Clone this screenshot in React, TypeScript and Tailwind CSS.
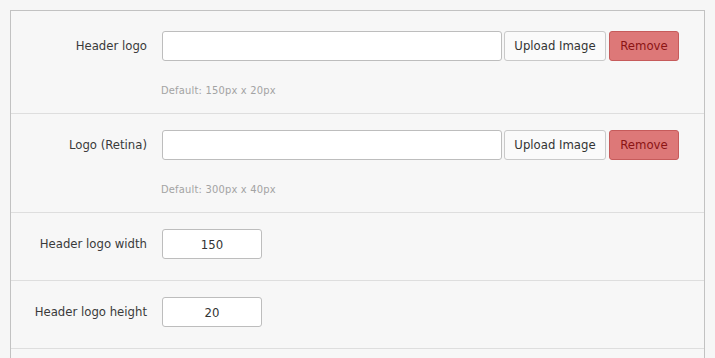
import React from 'react';

const font = { fontFamily: '"DejaVu Sans Condensed", "DejaVu Sans", Verdana, sans-serif' };

interface UploadRowProps {
  label: string;
  hint: string;
  first?: boolean;
}

const UploadRow: React.FC<UploadRowProps> = ({ label, hint, first }) => (
  <div className={`border-b border-[#dedede] pb-[15px] ${first ? 'pt-[20px]' : 'pt-[16px]'}`}>
    <div className="flex items-center">
      <label className="w-[136px] shrink-0 text-right text-[13px] text-[#3a3a3a]">{label}</label>
      <div className="ml-[15px] flex items-center">
        <input
          type="text"
          className="w-[340px] h-[30px] rounded-[3px] border border-[#bdbdbd] bg-white px-2 text-[13px] outline-none"
        />
        <button className="ml-[2px] h-[30px] w-[102px] rounded-[3px] border border-[#c9c9c9] bg-[#fafafa] text-[13px] text-[#333]">
          Upload Image
        </button>
        <button className="ml-[3px] h-[30px] w-[70px] rounded-[3px] border border-[#c65b5b] bg-[#dd7878] text-[13px] text-[#8b1414]">
          Remove
        </button>
      </div>
    </div>
    <div className="ml-[150px] mt-[22px] text-[11px] leading-[15px] tracking-[0.2px] text-[#a3a3a3]">{hint}</div>
  </div>
);

interface NumberRowProps {
  label: string;
  value: string;
}

const NumberRow: React.FC<NumberRowProps> = ({ label, value }) => (
  <div className="border-b border-[#dedede] pt-[16px] pb-[21px] flex items-center">
    <label className="w-[136px] shrink-0 text-right text-[13px] text-[#3a3a3a]">{label}</label>
    <input
      type="text"
      defaultValue={value}
      className="ml-[15px] w-[100px] h-[30px] rounded-[3px] border border-[#bdbdbd] bg-white text-center text-[13px] text-[#333] outline-none"
    />
  </div>
);

export default function App() {
  return (
    <div className="w-[715px] h-[358px] overflow-hidden bg-[#f6f6f6] pt-[10px] pl-[10px]" style={font}>
      <div className="w-[695px] h-[400px] border border-[#c2c2c2] bg-[#f7f7f7]">
        <UploadRow label="Header logo" hint="Default: 150px x 20px" first />
        <UploadRow label="Logo (Retina)" hint="Default: 300px x 40px" />
        <NumberRow label="Header logo width" value="150" />
        <NumberRow label="Header logo height" value="20" />
      </div>
    </div>
  );
}
